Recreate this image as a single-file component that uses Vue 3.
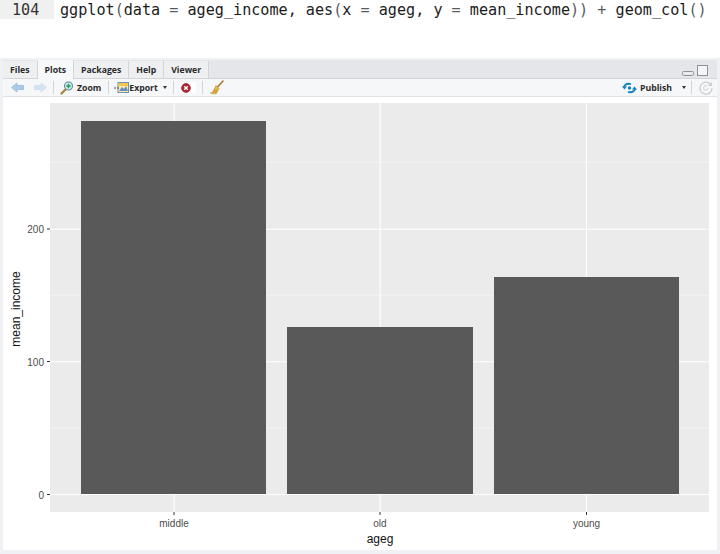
<script setup>
const tabs = [
  { name: 'Files', active: false },
  { name: 'Plots', active: true },
  { name: 'Packages', active: false },
  { name: 'Help', active: false },
  { name: 'Viewer', active: false }
]
const source = 'ggplot(data = ageg_income, aes(x = ageg, y = mean_income)) + geom_col()'
const tokens = source.split(/([()=+])/).filter(Boolean).map((text) => ({
  text,
  op: /^[()=+]$/.test(text)
}))
const hMajor = [229.2, 361.7, 494.5]
const hMinor = [162.2, 295.2, 428.2]
const vMajor = [174, 380.2, 586.5]
const bars = [
  { x: 81, w: 185, y: 121 },
  { x: 287, w: 186, y: 327 },
  { x: 494, w: 185, y: 277 }
]
const yTicks = [
  { y: 229, label: '200' },
  { y: 361.5, label: '100' },
  { y: 494.5, label: '0' }
]
const xTicks = [
  { x: 174, label: 'middle' },
  { x: 380, label: 'old' },
  { x: 586.5, label: 'young' }
]
</script>

<template>
  <div class="page">
    <div class="code">
      <div class="gutter">104</div>
      <div class="line"><span v-for="(t, i) in tokens" :key="i" :class="{ op: t.op }">{{ t.text }}</span></div>
    </div>
    <div class="pane">
      <div class="tabbar">
        <div
          v-for="t in tabs"
          :key="t.name"
          class="tab"
          :class="{ active: t.active }"
        >{{ t.name }}</div>
        <div class="winbtns">
          <svg width="27" height="14" viewBox="0 0 27 14">
            <rect x="0.5" y="8.5" width="11" height="4" rx="1" fill="#e8eaec" stroke="#8d9297" />
            <rect x="15.5" y="2.5" width="10" height="10" fill="#f2f4f5" stroke="#8d9297" />
          </svg>
        </div>
      </div>
      <div class="toolbar">
        <svg class="ico" width="13" height="11" viewBox="0 0 13 11">
          <path d="M0.5 5.5L6 1v2.5h6.5v4H6V10z" fill="#a9cbe8" stroke="#8cb6da" stroke-width="0.7" />
        </svg>
        <svg class="ico fwd" width="13" height="11" viewBox="0 0 13 11">
          <path d="M12.5 5.5L7 1v2.5H.5v4H7V10z" fill="#d5e4f1" stroke="#c8dbeb" stroke-width="0.7" />
        </svg>
        <span class="sep"></span>
        <svg class="ico" width="14" height="14" viewBox="0 0 14 14">
          <line x1="6" y1="8" x2="1.5" y2="12.5" stroke="#a8803a" stroke-width="2.2" stroke-linecap="round" />
          <circle cx="8.5" cy="5" r="4" fill="#cdeee0" stroke="#6a86a0" stroke-width="1.1" />
          <path d="M8.5 2.8v4.4M6.3 5h4.4" stroke="#1e9e62" stroke-width="1.4" />
        </svg>
        <span class="label zoomlabel">Zoom</span>
        <span class="sep zoomsep"></span>
        <svg class="ico" width="15" height="13" viewBox="0 0 15 13">
          <rect x="4" y="1.5" width="10.5" height="10" fill="#ffe9a6" stroke="#6f93b5" />
          <path d="M5 10l3-4 2 2 2-3 2 5z" fill="#5c90c4" />
          <rect x="4.5" y="2" width="9.5" height="3" fill="#f2c651" />
          <path d="M0 7h5" stroke="#555" stroke-width="1" stroke-dasharray="2 1" />
        </svg>
        <span class="label">Export</span>
        <span class="caret"></span>
        <span class="sep exportsep"></span>
        <svg class="ico" width="10" height="10" viewBox="0 0 10 10">
          <circle cx="5" cy="5" r="4.4" fill="#b3262b" stroke="#8d1c20" stroke-width="0.7" />
          <path d="M3.2 3.2l3.6 3.6M6.8 3.2l-3.6 3.6" stroke="#fff" stroke-width="1.4" />
        </svg>
        <span class="clearbox"></span>
        <span class="sep clearsep"></span>
        <svg class="ico" width="14" height="15" viewBox="0 0 14 15">
          <path d="M13 1L7.5 7" stroke="#a57a33" stroke-width="1.6" stroke-linecap="round" />
          <path d="M6 5.5l3 3-2.5 5c-2 .6-4.5.4-6-.5 1.8-.6 3-1.8 3-2.5z" fill="#e8b94a" stroke="#b98c2c" stroke-width="0.6" />
          <path d="M5 9l-1.5 3.5M6.5 9.5L5.5 13" stroke="#a87c25" stroke-width="0.6" />
        </svg>
        <div class="spacer"></div>
        <svg class="ico" width="15" height="12" viewBox="0 0 15 12">
          <path d="M1.5 5.5C3 2.5 6 1.2 9 2.2" fill="none" stroke="#1481c4" stroke-width="1.8" />
          <path d="M0 4.6h5L2.5 7.6z" fill="#1481c4" />
          <path d="M13.5 6.5C12 9.5 9 10.8 6 9.8" fill="none" stroke="#1481c4" stroke-width="1.8" />
          <path d="M15 7.4h-5l2.5-3z" fill="#1481c4" />
          <circle cx="7.5" cy="6" r="1.7" fill="#1481c4" />
        </svg>
        <span class="label publabel">Publish</span>
        <span class="caret pubcaret"></span>
        <span class="sep pubsep"></span>
        <svg class="ico" width="14" height="14" viewBox="0 0 14 14">
          <path d="M11.5 3.2A6 6 0 1 0 13 7" fill="none" stroke="#c9cdd1" stroke-width="1.3" />
          <path d="M9 7a2.2 2.2 0 1 1-1-1.9" fill="none" stroke="#d4d7da" stroke-width="1.1" />
          <path d="M13 1v4H9z" fill="#c9cdd1" />
        </svg>
      </div>
      <div class="plotwrap">
        <svg class="plot" width="714" height="453" viewBox="3 97 714 453">
          <rect x="50" y="103" width="659" height="409" fill="#ebebeb" />
          <line v-for="y in hMinor" :key="'m' + y" x1="50" x2="709" :y1="y" :y2="y" stroke="#f6f6f6" stroke-width="0.8" />
          <line v-for="y in hMajor" :key="'h' + y" x1="50" x2="709" :y1="y" :y2="y" stroke="#fff" stroke-width="1.1" />
          <line v-for="x in vMajor" :key="'v' + x" :x1="x" :x2="x" y1="103" y2="512" stroke="#fff" stroke-width="1.1" />
          <rect v-for="b in bars" :key="b.x" :x="b.x" :y="b.y" :width="b.w" :height="494 - b.y" fill="#595959" />
          <g v-for="t in yTicks" :key="t.label">
            <line x1="47" x2="50" :y1="t.y" :y2="t.y" stroke="#333" />
            <text class="tick" x="44" :y="t.y + 4" text-anchor="end">{{ t.label }}</text>
          </g>
          <g v-for="t in xTicks" :key="t.label">
            <line :x1="t.x" :x2="t.x" y1="512" y2="515" stroke="#333" />
            <text class="tick" :x="t.x" y="527" text-anchor="middle">{{ t.label }}</text>
          </g>
          <text class="axis" x="380" y="543" text-anchor="middle">ageg</text>
          <text class="axis" transform="translate(20 309) rotate(-90)" text-anchor="middle">mean_income</text>
        </svg>
      </div>
    </div>
  </div>
</template>

<style scoped>
.page {
  width: 720px;
  height: 554px;
  background: #fff;
  overflow: hidden;
  display: flex;
  flex-direction: column;
}
.code {
  height: 19px;
  display: flex;
  font-family: "DejaVu Sans Mono", monospace;
  font-size: 15.14px;
  color: #1c1c1c;
}
.gutter {
  width: 54px;
  height: 19px;
  line-height: 20px;
  background: #f0f0f0;
  box-sizing: border-box;
  padding-left: 12px;
  color: #333;
}
.line {
  padding-left: 6px;
  white-space: pre;
  line-height: 20px;
}
.op {
  color: #565c63;
}
.pane {
  margin-top: 39px;
  flex: 1;
  min-height: 0;
  box-sizing: border-box;
  padding: 2px 3px 4px 3px;
  background: #eff1f4;
  display: flex;
  flex-direction: column;
}
.tabbar {
  height: 19px;
  box-sizing: border-box;
  display: flex;
  align-items: flex-end;
  background: #e4e6e9;
  border-bottom: 1px solid #d2d5d8;
  font-family: "Open Sans", sans-serif;
  font-size: 8.7px;
  font-weight: 700;
  color: #2b2b2b;
}
.tab {
  height: 17px;
  line-height: 18px;
  padding: 0 7px;
  background: #edeff1;
  border-right: 1px solid #d2d5d8;
  box-sizing: border-box;
}
.tab.active {
  background: #f6f8f9;
  height: 19px;
  margin-bottom: -1px;
  line-height: 20px;
}
.winbtns {
  margin-left: auto;
  margin-right: 8px;
  height: 17px;
  display: flex;
  align-items: center;
}
.toolbar {
  height: 18px;
  box-sizing: border-box;
  display: flex;
  align-items: center;
  background: #f6f7f8;
  border-bottom: 1px solid #dfe1e4;
  padding: 0 4px 0 8px;
  font-family: "Open Sans", sans-serif;
  font-size: 8.7px;
  font-weight: 700;
  color: #2b2b2b;
}
.ico {
  flex: none;
}
.fwd {
  margin-left: 10px;
}
.sep {
  width: 1px;
  height: 13px;
  background: #d2d5d8;
  margin: 0 6px;
  flex: none;
}
.label {
  white-space: nowrap;
  position: relative;
  top: 0.5px;
}
.zoomlabel {
  margin-left: 3px;
}
.zoomsep {
  margin-left: 7px;
  margin-right: 5px;
}
.caret {
  width: 0;
  height: 0;
  border-left: 2.5px solid transparent;
  border-right: 2.5px solid transparent;
  border-top: 3px solid #333;
  margin-left: 5px;
  flex: none;
}
.exportsep {
  margin-right: 7px;
}
.clearbox {
  width: 5px;
  height: 11px;
  background: #fff;
  flex: none;
}
.clearsep {
  margin-right: 7px;
}
.spacer {
  flex: 1;
}
.publabel {
  margin-left: 3px;
}
.pubcaret {
  margin-left: 10px;
}
.pubsep {
  margin: 0 7px 0 5px;
}
.plotwrap {
  flex: 1;
  background: #fff;
  min-height: 0;
}
.plot {
  display: block;
}
.tick {
  font-family: "Liberation Sans", sans-serif;
  font-size: 10px;
  fill: #4d4d4d;
}
.axis {
  font-family: "Liberation Sans", sans-serif;
  font-size: 12px;
  fill: #111;
}
</style>
